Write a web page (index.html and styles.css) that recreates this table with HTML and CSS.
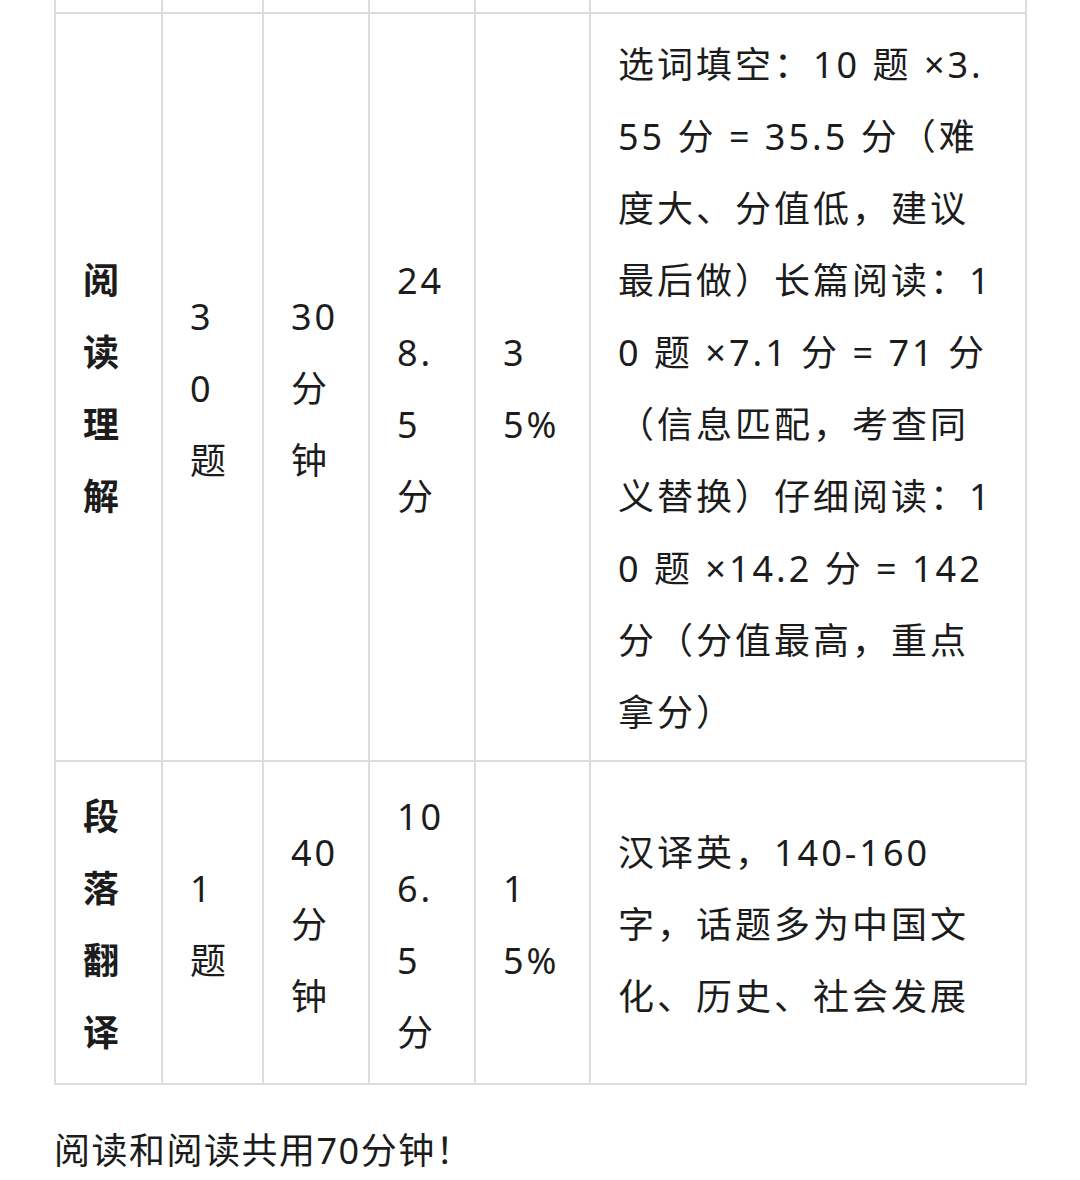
FILE: index.html
```html
<!DOCTYPE html>
<html lang="zh-CN">
<head>
<meta charset="utf-8">
<title>阅读理解与段落翻译</title>
<link rel="stylesheet" href="styles.css">
</head>
<body>
<div class="page">
  <table class="exam">
    <colgroup>
      <col class="c1"><col class="c2"><col class="c3"><col class="c4"><col class="c5"><col class="c6">
    </colgroup>
    <tbody>
      <tr class="cut">
        <td></td><td></td><td></td><td></td><td></td><td></td>
      </tr>
      <tr>
        <td class="name">阅读理解</td>
        <td>30题</td>
        <td>30分钟</td>
        <td>248.5分</td>
        <td>35%</td>
        <td class="desc">选词填空：10 题 ×3.55 分 = 35.5 分（难度大、分值低，建议最后做）长篇阅读：10 题 ×7.1 分 = 71 分（信息匹配，考查同义替换）仔细阅读：10 题 ×14.2 分 = 142 分（分值最高，重点拿分）</td>
      </tr>
      <tr class="row-trans">
        <td class="name">段落翻译</td>
        <td>1题</td>
        <td>40分钟</td>
        <td>106.5分</td>
        <td>15%</td>
        <td class="desc">汉译英，140-160字，话题多为中国文化、历史、社会发展</td>
      </tr>
    </tbody>
  </table>
  <p class="note">阅读和阅读共用70分钟！</p>
</div>
</body>
</html>
```
FILE: styles.css
```css
html, body {
  margin: 0;
  padding: 0;
  background: #ffffff;
}

body {
  font-family: "Noto Sans", "Noto Sans CJK SC", sans-serif;
  color: #1c1c1c;
}

.page {
  padding: 0 55px 0 54px;
}

.exam {
  width: 971px;
  border-collapse: collapse;
  table-layout: fixed;
}

.c1 { width: 107px; }
.c2 { width: 101px; }
.c3 { width: 106px; }
.c4 { width: 106px; }
.c5 { width: 115px; }
.c6 { width: 436px; }

.exam td {
  border: 2px solid #dcdcdc;
  padding: 15px 28px 11px 27px;
  vertical-align: middle;
  font-size: 36px;
  line-height: 72px;
  letter-spacing: 3px;
  word-break: break-all;
  text-align: left;
}

.exam .cut td {
  border-top: 0;
  padding: 0;
  height: 12px;
}

.exam td.name {
  font-weight: 700;
}

.exam td.desc {
  padding-right: 25px;
}

.row-trans {
  height: 323px;
}

.note {
  margin: 30px 0 0;
  font-size: 36px;
  line-height: 72px;
  letter-spacing: 1.5px;
}
```
